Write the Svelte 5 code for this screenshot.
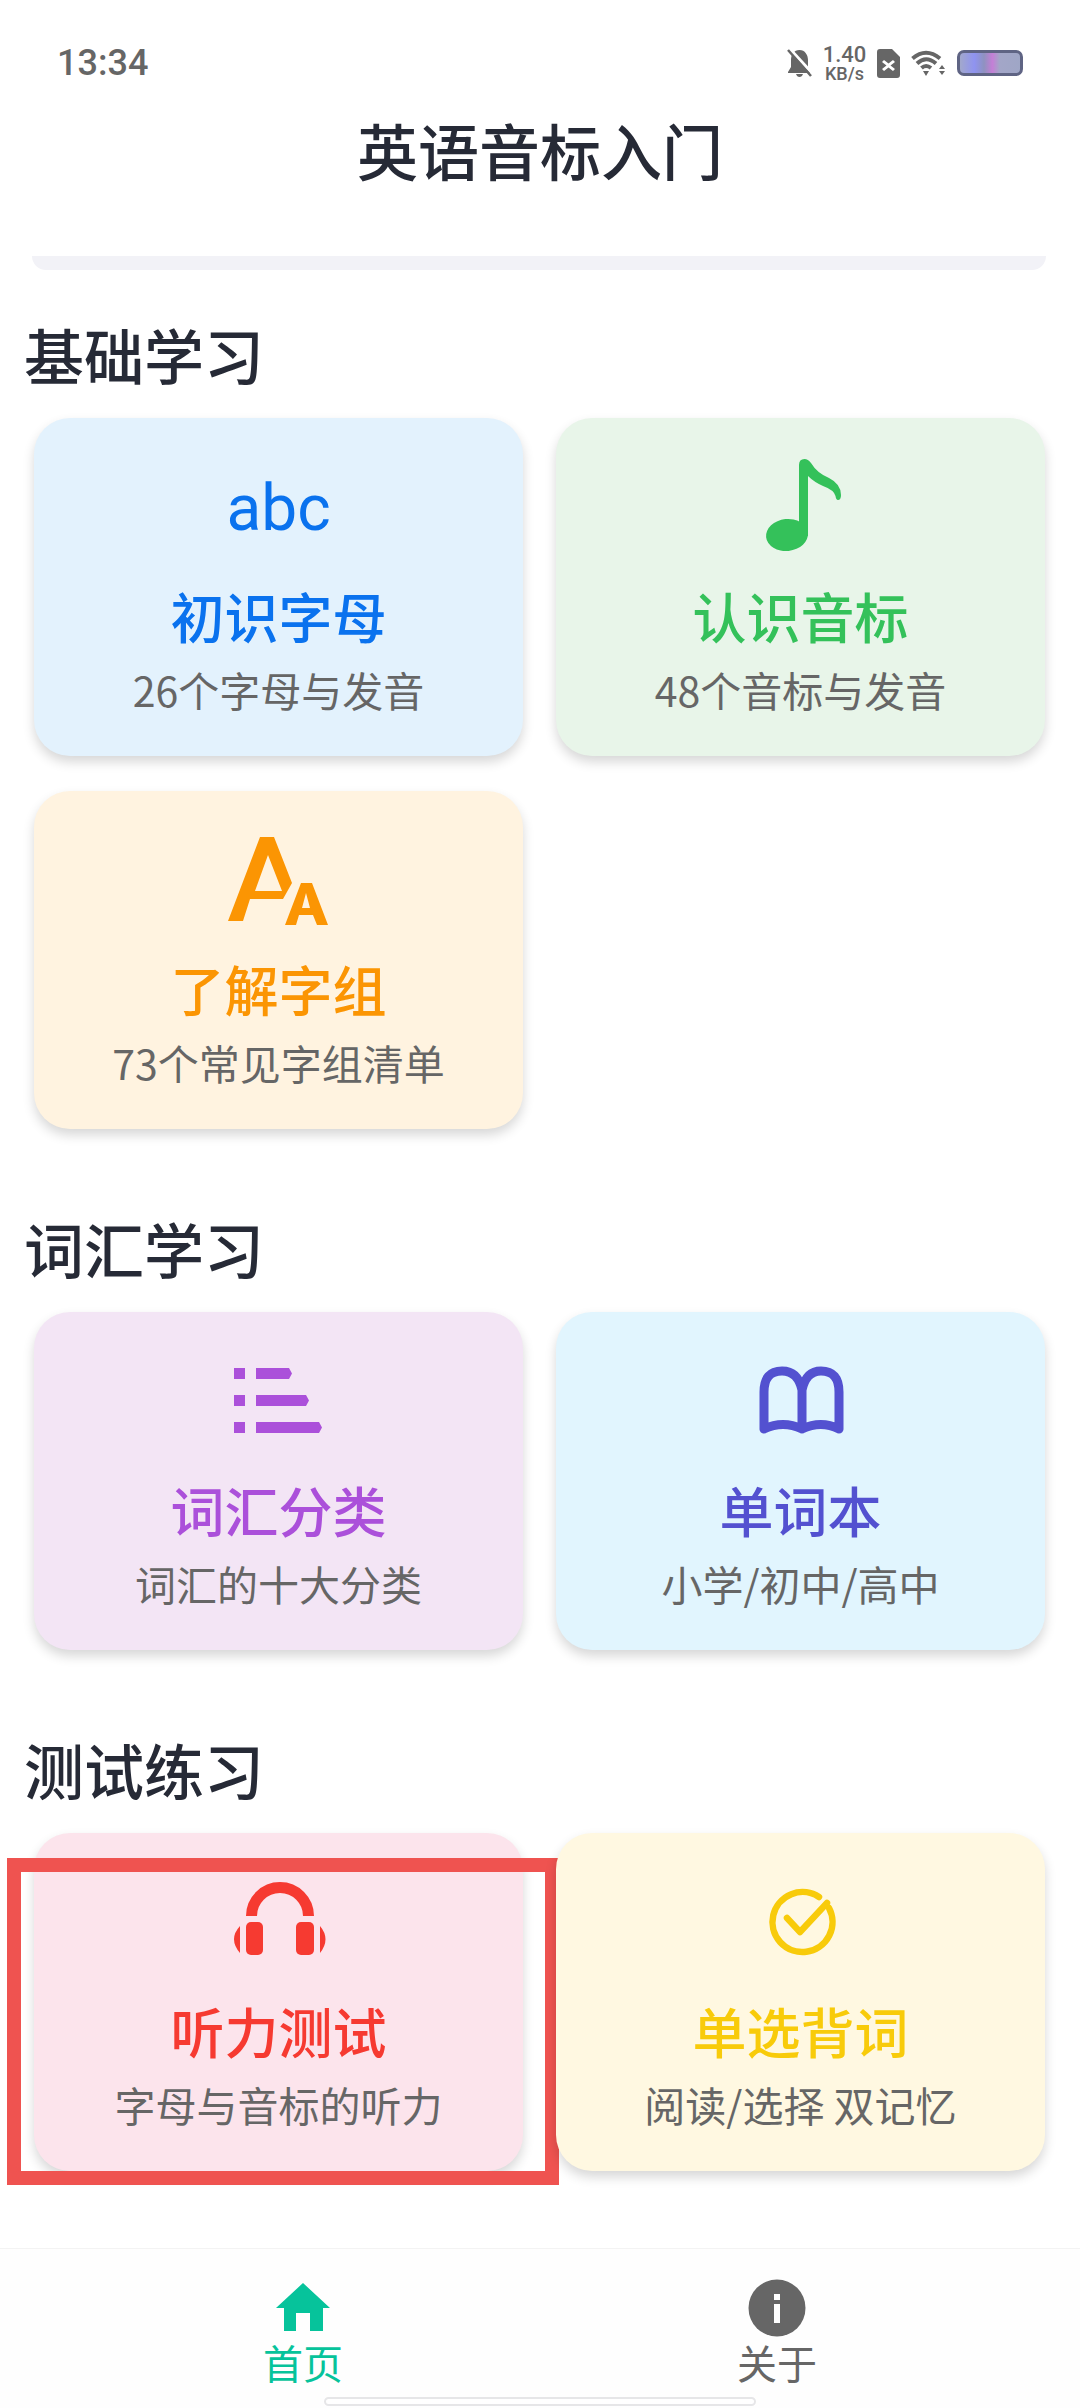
<script>
  const sections = [
    {
      title: "基础学习",
      cards: [
        { icon: "abc", tone: "blue", name: "初识字母", desc: "26个字母与发音" },
        { icon: "note", tone: "green", name: "认识音标", desc: "48个音标与发音" },
        { icon: "letters", tone: "orange", name: "了解字组", desc: "73个常见字组清单" },
      ],
    },
    {
      title: "词汇学习",
      cards: [
        { icon: "list", tone: "purple", name: "词汇分类", desc: "词汇的十大分类" },
        { icon: "book", tone: "indigo", name: "单词本", desc: "小学/初中/高中" },
      ],
    },
    {
      title: "测试练习",
      cards: [
        { icon: "headphones", tone: "red", name: "听力测试", desc: "字母与音标的听力", marked: true },
        { icon: "check", tone: "yellow", name: "单选背词", desc: "阅读/选择 双记忆" },
      ],
    },
  ];
</script>

{#snippet cardIcon(name)}
  {#if name === "abc"}
    <span class="abc">abc</span>
  {:else}
    <svg class="icon" viewBox="0 0 120 120">
      {#if name === "note"}
        <path d="M58 89V19Q58 13 63.500 13Q67 13 70 17Q76 27 88 32Q100 38 100 49Q100 54 97 54Q95 54 94.500 50Q93 44 82 40Q73 36 67 30V90Z" />
        <ellipse cx="46" cy="89" rx="21" ry="16" transform="rotate(-6 46 89)" />
      {:else if name === "letters"}
        <path fill-rule="evenodd" d="M9 102L41 18H55L73 64L64 80H31L24 102ZM49 36L36 72H63Z" />
        <path fill-rule="evenodd" d="M66 106L82 64H93L109 106H98L94 96H80L77 106ZM87 74L83 89H91Z" />
      {:else if name === "list"}
        <path d="M15 28H26V39H15ZM15 55H26V66H15ZM15 82H26V93H15Z" />
        <path d="M37 28H70L73 33.500L70 39H37ZM37 55H87L90 60.500L87 66H37ZM37 82H100L103 87.500L100 93H37Z" />
      {:else if name === "book"}
        <path class="line" d="M23 89V52Q23 31 41 31Q57 31 61 50Q65 31 80 31Q98 31 98 52V89M61 50V89M23 89Q42 80 61 89Q80 80 98 89" />
      {:else if name === "headphones"}
        <path class="line thick" d="M32.500 55A28.500 28.500 0 0 1 89.500 55" />
        <rect x="27" y="61" width="17" height="33" rx="5" />
        <rect x="77" y="61" width="18" height="33" rx="5" />
        <path d="M21 65Q9 78 21 92ZM101 65Q112 78 101 92Z" />
      {:else if name === "check"}
        <path class="line slim" d="M78 36A30 30 0 1 0 88 47" />
        <path class="line slim" d="M46 57L59 71L86 42" />
      {/if}
    </svg>
  {/if}
{/snippet}

<div class="page">
  <div class="status">
    <span class="time">13:34</span>
    <div class="status-icons">
      <svg width="25" height="28" viewBox="0 0 25 28">
        <path d="M12.500 1C18 1 21 6 21 11V18L24 23V24H1V23L4 18V11C4 6 7 1 12.500 1ZM9 25H16Q15 28 12.500 28Q10 28 9 25Z" />
        <path class="slash-gap" d="M3 0L25 24" />
        <path class="slash" d="M1 1L24 27" />
      </svg>
      <div class="speed">
        <span class="speed-num">1.40</span>
        <span class="speed-unit">KB/s</span>
      </div>
      <svg width="23" height="29" viewBox="0 0 23 29">
        <path fill-rule="evenodd" d="M3 0H15L23 8V26Q23 29 20 29H3Q0 29 0 26V3Q0 0 3 0ZM7 11L5 13L9.500 16.500L5 20L7 22L11.500 18.500L16 22L18 20L13.500 16.500L18 13L16 11L11.500 14.500Z" />
      </svg>
      <svg width="35" height="26" viewBox="0 0 35 26">
        <path class="wifi" d="M1.500 8.500Q15 -3 29 8.500M6 13.500Q15 5 25 13.500M10.500 18Q15 14 20 18" />
        <path d="M12 21H18L15 26ZM28 19L31 15L34 19ZM28 21H34L31 25Z" />
      </svg>
      <div class="battery"></div>
    </div>
  </div>

  <header class="top">英语音标入门</header>

  <main class="content">
    <div class="sliver"></div>

    {#each sections as section}
      <section class="section">
        <h2>{section.title}</h2>
        <div class="grid">
          {#each section.cards as card}
            <div class="card {card.tone}">
              <div class="icon-box">{@render cardIcon(card.icon)}</div>
              <div class="name">{card.name}</div>
              <div class="desc">{card.desc}</div>
              {#if card.marked}
                <div class="mark"></div>
              {/if}
            </div>
          {/each}
        </div>
      </section>
    {/each}
  </main>

  <nav class="nav">
    <div class="tab active">
      <svg width="56" height="58" viewBox="0 0 56 58">
        <path fill-rule="evenodd" d="M28 4L55 29H48V52H35V34H21V52H9V29H1Z" />
      </svg>
      <span>首页</span>
    </div>
    <div class="tab">
      <svg width="58" height="58" viewBox="0 0 58 58">
        <circle cx="29" cy="29" r="28.500" />
        <rect class="i" x="26" y="15" width="6" height="6" />
        <rect class="i" x="26" y="25" width="6" height="19" />
      </svg>
      <span>关于</span>
    </div>
    <div class="home-bar"></div>
  </nav>
</div>

<style>
  :global(body) {
    background: #fff;
  }

  .page {
    width: 1080px;
    height: 2408px;
    display: flex;
    flex-direction: column;
    overflow: hidden;
    background: #fff;
    font-family: "Noto Sans CJK SC", "Noto Sans", sans-serif;
  }

  .status {
    height: 100px;
    padding: 26px 57px 0;
    box-sizing: border-box;
    display: flex;
    justify-content: space-between;
    align-items: center;
    color: #666;
  }

  .time {
    font-family: Roboto, sans-serif;
    font-size: 36px;
    font-weight: 500;
    line-height: 40px;
  }

  .status-icons {
    display: flex;
    align-items: center;
    gap: 11px;
    height: 40px;
  }

  .status-icons svg {
    fill: #666;
  }

  .slash {
    stroke: #666;
    stroke-width: 2.500;
    fill: none;
  }

  .slash-gap {
    stroke: #fff;
    stroke-width: 3;
    fill: none;
  }

  .wifi {
    stroke: #666;
    stroke-width: 4;
    fill: none;
  }

  .speed {
    display: flex;
    flex-direction: column;
    align-items: center;
    font-family: Roboto, sans-serif;
    font-weight: 500;
    width: 43px;
  }

  .speed-num {
    font-size: 22px;
    line-height: 21px;
  }

  .speed-unit {
    font-size: 18px;
    line-height: 18px;
  }

  .battery {
    width: 66px;
    height: 26px;
    box-sizing: border-box;
    border: 3px solid #5f6484;
    border-radius: 7px;
    background: linear-gradient(
      90deg,
      #a2a8cc 0%,
      #8f93f0 24%,
      #8f92c0 40%,
      #c47fd6 54%,
      #a3a6c8 66%,
      #9fa6c6 100%
    );
  }

  .top {
    height: 108px;
    line-height: 100px;
    text-align: center;
    font-size: 61px;
    font-weight: 500;
    color: #262a36;
  }

  .content {
    flex: 1;
    min-height: 0;
    padding: 48px 34px 0 24px;
  }

  .sliver {
    height: 14px;
    margin: 0 0 0 8px;
    background: #f2f2f7;
    border-radius: 0 0 24px 24px;
  }

  .section {
    margin-bottom: 84px;
  }

  .sliver + .section {
    margin-top: 49px;
  }

  h2 {
    margin: 0 0 29px;
    font-size: 60px;
    line-height: 70px;
    font-weight: 500;
    color: #262a36;
  }

  .grid {
    margin-left: 10px;
    display: grid;
    grid-template-columns: 489px 489px;
    column-gap: 33px;
    row-gap: 35px;
  }

  .card {
    position: relative;
    height: 338px;
    box-sizing: border-box;
    padding-top: 28px;
    border-radius: 36px;
    box-shadow: 0 6px 12px rgba(0, 0, 0, 0.16);
    display: flex;
    flex-direction: column;
    align-items: center;
    color: var(--tone);
    background: var(--bg);
  }

  .blue { --tone: #0a72ee; --bg: #e3f2fd; }
  .green { --tone: #34c15a; --bg: #e8f5e9; }
  .orange { --tone: #fb9503; --bg: #fff3e0; }
  .purple { --tone: #ab50da; --bg: #f3e5f5; }
  .indigo { --tone: #5351d0; --bg: #e1f5fe; }
  .red { --tone: #f63a31; --bg: #fce4ec; }
  .yellow { --tone: #f8cb0a; --bg: #fff8e1; }

  .icon-box {
    width: 120px;
    height: 120px;
    display: flex;
    align-items: center;
    justify-content: center;
  }

  .icon {
    width: 120px;
    height: 120px;
    fill: var(--tone);
  }

  .line {
    fill: none;
    stroke: var(--tone);
    stroke-width: 9;
    stroke-linejoin: round;
    stroke-linecap: round;
  }

  .line.thick {
    stroke-width: 11;
    stroke-linecap: butt;
  }

  .line.slim {
    stroke-width: 6.500;
  }

  .abc {
    font-family: Roboto, sans-serif;
    font-size: 64px;
    line-height: 64px;
    margin-top: 6px;
  }

  .name {
    margin-top: 20px;
    font-size: 54px;
    line-height: 60px;
    font-weight: 500;
  }

  .desc {
    margin-top: 18px;
    font-size: 41px;
    line-height: 50px;
    color: #666;
  }

  .mark {
    position: absolute;
    left: -27px;
    right: -36px;
    top: 25px;
    bottom: -14px;
    border: 14px solid #ef5350;
  }

  .nav {
    position: relative;
    height: 160px;
    box-sizing: border-box;
    padding: 30px 223px 0;
    display: flex;
    justify-content: space-between;
    background: #fefefe;
    border-top: 1px solid #f3f3f3;
  }

  .tab {
    width: 160px;
    display: flex;
    flex-direction: column;
    align-items: center;
    gap: 3px;
    font-size: 40px;
    line-height: 44px;
    color: #666;
    fill: #666;
  }

  .tab.active {
    color: #06c39b;
    fill: #06c39b;
  }

  .i {
    fill: #fff;
  }

  .home-bar {
    position: absolute;
    left: 324px;
    width: 432px;
    bottom: 2px;
    height: 9px;
    box-sizing: border-box;
    background: #fff;
    border: 2px solid #e6e6e8;
    border-radius: 5px;
  }
</style>
